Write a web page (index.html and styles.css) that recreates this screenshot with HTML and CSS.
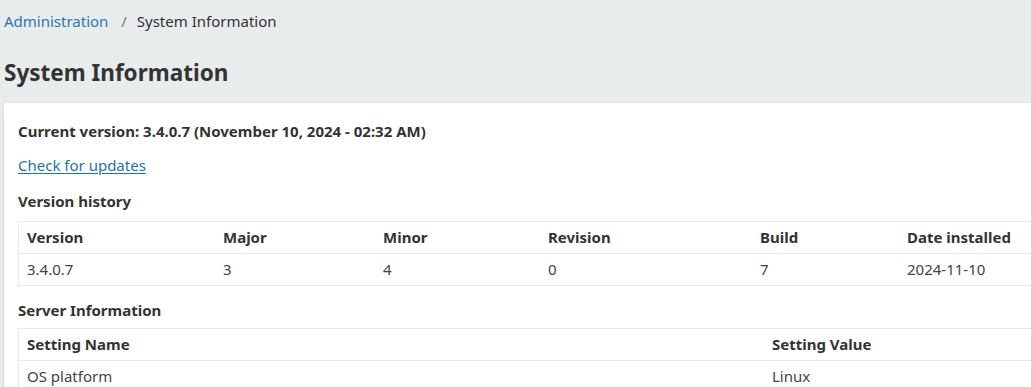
FILE: index.html
```html
<!DOCTYPE html>
<html lang="en">
<head>
  <meta charset="UTF-8">
  <title>System Information</title>
  <link rel="stylesheet" href="styles.css">
</head>
<body>

  <div class="breadcrumb">
    <a href="#">Administration</a>
    <span class="sep">/</span>
    <span>System Information</span>
  </div>

  <h1>System Information</h1>

  <div class="card">
    <p class="current">Current version: 3.4.0.7 (November 10, 2024 - 02:32 AM)</p>
    <p><a href="#" class="check">Check for updates</a></p>

    <h3>Version history</h3>
    <table class="history">
      <thead>
        <tr>
          <th class="c1">Version</th>
          <th class="c2">Major</th>
          <th class="c3">Minor</th>
          <th class="c4">Revision</th>
          <th class="c5">Build</th>
          <th>Date installed</th>
        </tr>
      </thead>
      <tbody>
        <tr>
          <td>3.4.0.7</td>
          <td>3</td>
          <td>4</td>
          <td>0</td>
          <td>7</td>
          <td>2024-11-10</td>
        </tr>
      </tbody>
    </table>

    <h3 class="server-title">Server Information</h3>
    <table class="server">
      <thead>
        <tr>
          <th class="name">Setting Name</th>
          <th>Setting Value</th>
        </tr>
      </thead>
      <tbody>
        <tr>
          <td>OS platform</td>
          <td>Linux</td>
        </tr>
      </tbody>
    </table>
  </div>

</body>
</html>
```

FILE: styles.css
```css
html, body {
  overflow: hidden;
}

body {
  margin: 0;
  padding: 0 0 0 3px;
  font-family: "Noto Sans", "Open Sans", sans-serif;
  font-size: 15px;
  color: #333;
  background-color: #e9ecec;
}

a {
  color: #2a78ad;
  text-decoration: none;
}

.breadcrumb {
  padding-top: 10px;
  padding-left: 1px;
  font-size: 15px;
  line-height: 22px;
  color: #333;
}

.breadcrumb .sep {
  margin: 0 6px 0 9px;
  color: #777;
}

h1 {
  margin: 26px 0 0 1px;
  font-size: 22.5px;
  line-height: 30px;
  font-weight: bold;
  color: #333;
}

.card {
  width: 1100px;
  margin-top: 14px;
  padding: 14px 14px 20px 14px;
  background-color: #fff;
  border: 1px solid #dde1e3;
  border-radius: 3px;
}

.card p {
  margin: 0;
  line-height: 20px;
}

.current {
  font-weight: bold;
  padding-top: 4px;
}

.card p + p {
  margin-top: 14px;
}

.check {
  color: #1f72ad;
  text-decoration: underline;
  text-underline-offset: 2px;
}

h3 {
  margin: 16px 0 0 0;
  font-size: 15px;
  line-height: 20px;
  font-weight: bold;
}

table {
  width: 100%;
  margin-top: 10px;
  border-collapse: collapse;
  table-layout: fixed;
  border-left: 1px solid #e6e8e9;
  border-right: 1px solid #e6e8e9;
}

th, td {
  text-align: left;
  padding: 6px 8px;
  line-height: 19px;
  border-top: 1px solid #e6e8e9;
  border-bottom: 1px solid #e6e8e9;
}

th {
  font-weight: bold;
}

td {
  color: #444;
}

h3.server-title {
  margin-top: 14px;
}

table.server {
  margin-top: 8px;
}

.history .c1 { width: 180px; }
.history .c2 { width: 144px; }
.history .c3 { width: 149px; }
.history .c4 { width: 196px; }
.history .c5 { width: 131px; }

.server .name { width: 729px; }
```
